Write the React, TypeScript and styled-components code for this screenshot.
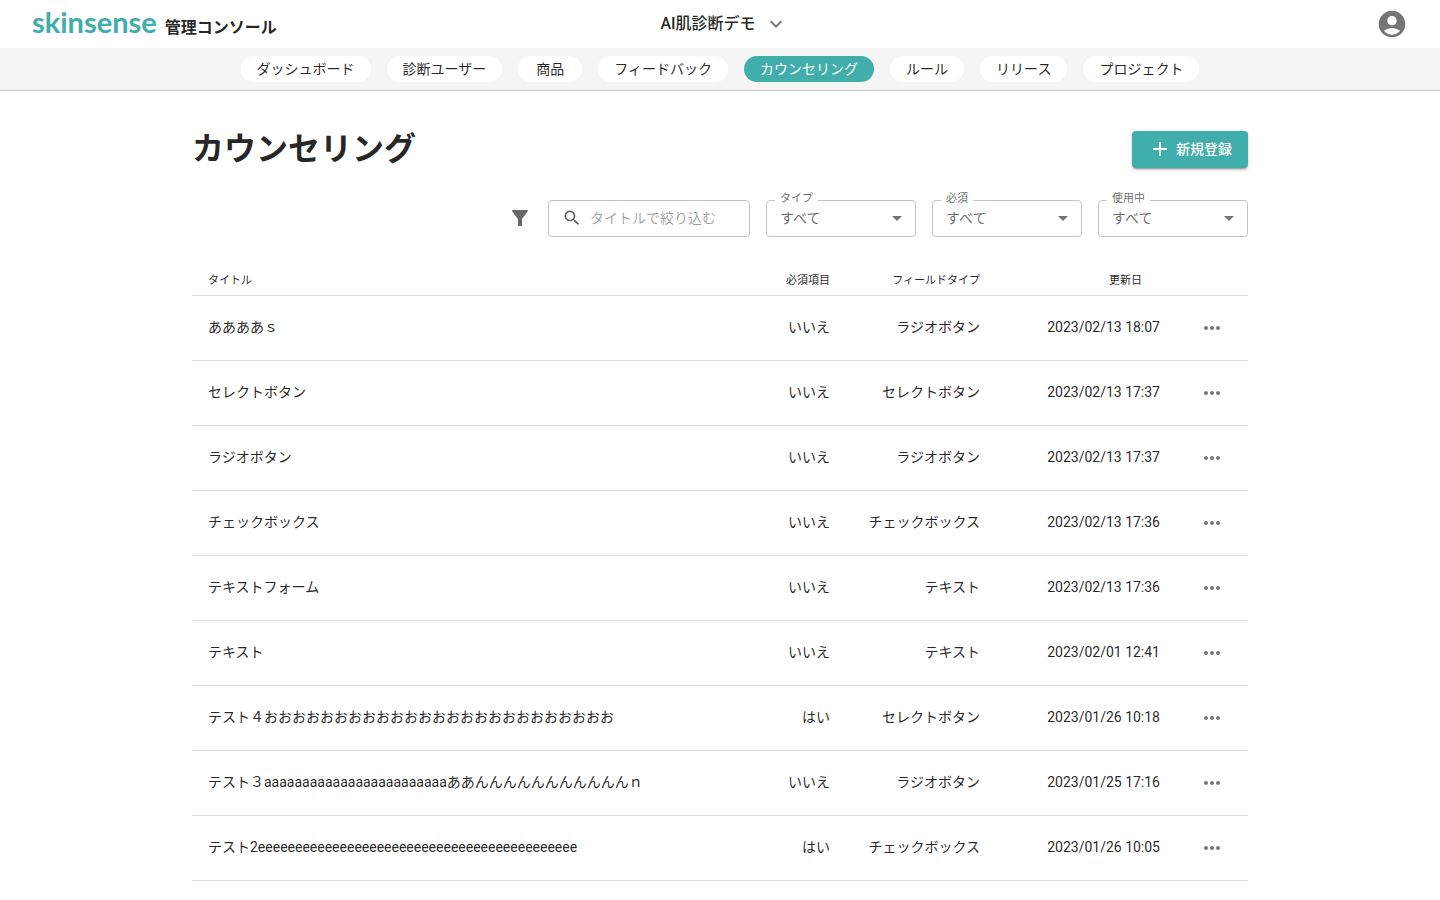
import React from 'react';
import styled, { createGlobalStyle } from 'styled-components';
import {
  MdAccountCircle,
  MdAdd,
  MdArrowDropDown,
  MdExpandMore,
  MdFilterAlt,
  MdMoreHoriz,
  MdSearch,
} from 'react-icons/md';

const color = {
  teal: '#40aeaa',
  text: 'rgba(0, 0, 0, 0.87)',
  muted: 'rgba(0, 0, 0, 0.6)',
  icon: 'rgba(0, 0, 0, 0.54)',
  line: '#e0e0e0',
  outline: '#c4c4c4',
};

const GlobalStyle = createGlobalStyle`
  *, *::before, *::after { box-sizing: border-box; }
  body {
    margin: 0;
    background: #fff;
    color: ${color.text};
    font-family: Roboto, "Noto Sans CJK JP", sans-serif;
    font-size: 14px;
    line-height: 20px;
  }
  button, input, select { font: inherit; color: inherit; }
  svg { display: block; flex: none; }
`;

const Header = styled.header`
  display: grid;
  grid-template-columns: 1fr auto 1fr;
  align-items: center;
  height: 48px;
  padding: 0 32px;
`;

const Brand = styled.a`
  display: flex;
  align-items: baseline;
  gap: 8px;
  padding-bottom: 4px;
  color: inherit;
  text-decoration: none;
  white-space: nowrap;
`;

const Logo = styled.span`
  color: ${color.teal};
  font-family: Lato, sans-serif;
  font-size: 29px;
  font-weight: 700;
  line-height: 32px;
`;

const BrandSub = styled.span`
  font-size: 16px;
  font-weight: 700;
`;

const PlainButton = styled.button`
  display: inline-flex;
  align-items: center;
  padding: 0;
  border: 0;
  background: none;
  color: ${color.icon};
  vertical-align: middle;
  cursor: pointer;
`;

const ProjectButton = styled(PlainButton)`
  gap: 8px;
  padding-left: 8px;
  font-size: 16px;
  font-weight: 500;
  line-height: 24px;
`;

const ProjectName = styled.span`
  color: ${color.text};
`;

const AccountButton = styled(PlainButton)`
  justify-self: end;
`;

const Nav = styled.nav`
  display: flex;
  justify-content: center;
  gap: 16px;
  padding: 8px 16px;
  background: #f5f5f5;
  border-bottom: 1px solid ${color.outline};
`;

const NavLink = styled.a<{ $active?: boolean }>`
  min-width: 64px;
  padding: 3px 16px;
  border-radius: 13px;
  background: ${(p) => (p.$active ? color.teal : '#fff')};
  color: ${(p) => (p.$active ? '#fff' : color.text)};
  text-align: center;
  text-decoration: none;
  white-space: nowrap;
`;

const Main = styled.main`
  max-width: 1104px;
  margin: 0 auto;
  padding: 40px 24px 16px;
`;

const TitleRow = styled.div`
  display: flex;
  align-items: flex-start;
  justify-content: space-between;
  margin-bottom: 32px;
`;

const Title = styled.h1`
  margin: 0;
  font-size: 32px;
  font-weight: 700;
  line-height: 36px;
`;

const CreateButton = styled.button`
  display: flex;
  align-items: center;
  gap: 4px;
  height: 37px;
  padding: 0 16px 1px;
  border: 0;
  border-radius: 4px;
  background: ${color.teal};
  color: #fff;
  font-weight: 500;
  box-shadow: 0 3px 1px -2px rgba(0, 0, 0, 0.2), 0 2px 2px 0 rgba(0, 0, 0, 0.14),
    0 1px 5px 0 rgba(0, 0, 0, 0.12);
  cursor: pointer;
`;

const Filters = styled.form`
  display: flex;
  align-items: center;
  justify-content: flex-end;
  gap: 16px;
  margin-bottom: 22px;
  color: ${color.muted};
`;

const FilterMark = styled.span`
  padding-bottom: 1px;
`;

const SearchField = styled.label`
  display: flex;
  align-items: center;
  gap: 8px;
  width: 202px;
  height: 37px;
  padding: 0 13px 1px;
  border: 1px solid ${color.outline};
  border-radius: 4px;
`;

const SearchInput = styled.input`
  flex: 1;
  min-width: 0;
  padding: 0;
  border: 0;
  outline: 0;
  background: none;
  &::placeholder {
    color: rgba(0, 0, 0, 0.38);
    opacity: 1;
  }
`;

const SelectField = styled.div`
  position: relative;
  width: 150px;
  height: 37px;
`;

const SelectLabel = styled.label`
  position: absolute;
  top: -9px;
  left: 9px;
  padding: 0 5px;
  background: #fff;
  font-size: 11px;
  line-height: 16px;
`;

const Select = styled.select`
  width: 100%;
  height: 100%;
  padding: 0 32px 2px 13px;
  border: 1px solid ${color.outline};
  border-radius: 4px;
  background: #fff;
  appearance: none;
`;

const Caret = styled(MdArrowDropDown)`
  position: absolute;
  top: 6px;
  right: 7px;
  color: ${color.icon};
  pointer-events: none;
`;

const Table = styled.table`
  width: 100%;
  border-collapse: separate;
  border-spacing: 0;
  table-layout: fixed;
`;

const HeadCell = styled.th<{ $width?: number; $end?: boolean; $sortable?: boolean }>`
  width: ${(p) => (p.$width ? `${p.$width}px` : 'auto')};
  height: 37px;
  padding: 12px ${(p) => (p.$sortable ? 34 : 16)}px 4px 16px;
  border-bottom: 1px solid ${color.line};
  font-size: 11px;
  font-weight: 400;
  text-align: ${(p) => (p.$end ? 'right' : 'left')};
  vertical-align: bottom;
  white-space: nowrap;
`;

const Cell = styled.td<{ $end?: boolean }>`
  height: 65px;
  padding: 0 16px 2px;
  border-bottom: 1px solid ${color.line};
  text-align: ${(p) => (p.$end ? 'right' : 'left')};
  white-space: nowrap;
`;

const MenuCell = styled(Cell)`
  padding: 0 24px;
`;

const navItems = [
  'ダッシュボード',
  '診断ユーザー',
  '商品',
  'フィードバック',
  'カウンセリング',
  'ルール',
  'リリース',
  'プロジェクト',
];

const filters = [
  { id: 'type', label: 'タイプ', options: ['すべて', 'テキスト', 'ラジオボタン', 'チェックボックス', 'セレクトボタン'] },
  { id: 'required', label: '必須', options: ['すべて', 'はい', 'いいえ'] },
  { id: 'active', label: '使用中', options: ['すべて', 'はい', 'いいえ'] },
];

const rows = [
  ['ああああｓ', 'いいえ', 'ラジオボタン', '2023/02/13 18:07'],
  ['セレクトボタン', 'いいえ', 'セレクトボタン', '2023/02/13 17:37'],
  ['ラジオボタン', 'いいえ', 'ラジオボタン', '2023/02/13 17:37'],
  ['チェックボックス', 'いいえ', 'チェックボックス', '2023/02/13 17:36'],
  ['テキストフォーム', 'いいえ', 'テキスト', '2023/02/13 17:36'],
  ['テキスト', 'いいえ', 'テキスト', '2023/02/01 12:41'],
  ['テスト４おおおおおおおおおおおおおおおおおおおおおおおおお', 'はい', 'セレクトボタン', '2023/01/26 10:18'],
  ['テスト３aaaaaaaaaaaaaaaaaaaaaaaaああんんんんんんんんんんんｎ', 'いいえ', 'ラジオボタン', '2023/01/25 17:16'],
  ['テスト2eeeeeeeeeeeeeeeeeeeeeeeeeeeeeeeeeeeeeeeeeee', 'はい', 'チェックボックス', '2023/01/26 10:05'],
];

export default function App() {
  return (
    <>
      <GlobalStyle />
      <Header>
        <Brand href="#">
          <Logo>skinsense</Logo>
          <BrandSub>管理コンソール</BrandSub>
        </Brand>
        <ProjectButton type="button">
          <ProjectName>AI肌診断デモ</ProjectName>
          <MdExpandMore size={24} />
        </ProjectButton>
        <AccountButton type="button" aria-label="アカウント">
          <MdAccountCircle size={32} />
        </AccountButton>
      </Header>
      <Nav>
        {navItems.map((item) => (
          <NavLink key={item} href="#" $active={item === 'カウンセリング'}>
            {item}
          </NavLink>
        ))}
      </Nav>
      <Main>
        <TitleRow>
          <Title>カウンセリング</Title>
          <CreateButton type="button">
            <MdAdd size={24} />
            新規登録
          </CreateButton>
        </TitleRow>
        <Filters onSubmit={(e) => e.preventDefault()}>
          <FilterMark>
            <MdFilterAlt size={24} />
          </FilterMark>
          <SearchField>
            <MdSearch size={20} />
            <SearchInput type="text" placeholder="タイトルで絞り込む" aria-label="タイトルで絞り込む" />
          </SearchField>
          {filters.map((f) => (
            <SelectField key={f.id}>
              <Select id={f.id}>
                {f.options.map((o) => (
                  <option key={o}>{o}</option>
                ))}
              </Select>
              <SelectLabel htmlFor={f.id}>{f.label}</SelectLabel>
              <Caret size={24} />
            </SelectField>
          ))}
        </Filters>
        <Table>
          <thead>
            <tr>
              <HeadCell>タイトル</HeadCell>
              <HeadCell $width={110} $end>必須項目</HeadCell>
              <HeadCell $width={150} $end>フィールドタイプ</HeadCell>
              <HeadCell $width={180} $end $sortable>更新日</HeadCell>
              <HeadCell $width={72} aria-label="操作" />
            </tr>
          </thead>
          <tbody>
            {rows.map(([title, required, type, updated]) => (
              <tr key={title}>
                <Cell>{title}</Cell>
                <Cell $end>{required}</Cell>
                <Cell $end>{type}</Cell>
                <Cell $end>{updated}</Cell>
                <MenuCell>
                  <PlainButton type="button" aria-label={`${title}のメニュー`}>
                    <MdMoreHoriz size={24} />
                  </PlainButton>
                </MenuCell>
              </tr>
            ))}
          </tbody>
        </Table>
      </Main>
    </>
  );
}
